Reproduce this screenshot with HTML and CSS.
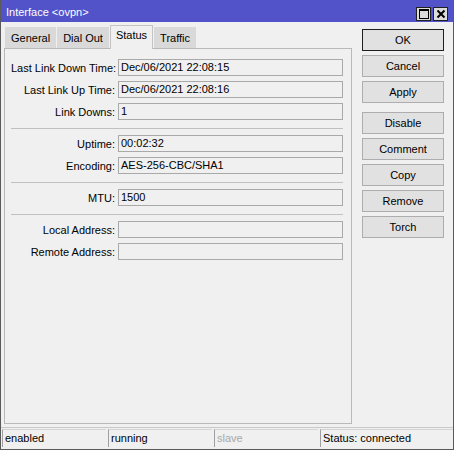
FILE: index.html
```html
<html>
	<head>
		<title>Interface &lt;ovpn&gt;</title>
		<link rel="stylesheet" href="styles.css">
	</head>
	<body>
		<div class="window">
			<div class="titlebar">
				<span class="title">Interface &lt;ovpn&gt;</span>
				<span class="tbtn">
					<svg width="10" height="10" viewBox="0 0 10 10"><rect x="0.5" y="0.5" width="9" height="9" fill="none" stroke="#000" stroke-width="1"/><rect x="0" y="0" width="10" height="2" fill="#000"/></svg>
				</span>
				<span class="tbtn">
					<svg width="10" height="10" viewBox="0 0 10 10"><path d="M1.5 1.5 L8.5 8.5 M8.5 1.5 L1.5 8.5" stroke="#000" stroke-width="2"/></svg>
				</span>
			</div>

			<div class="main">
				<div class="left">
					<div class="tabs">
						<div class="tab">General</div>
						<div class="tab">Dial Out</div>
						<div class="tab active">Status</div>
						<div class="tab">Traffic</div>
					</div>
					<div class="panel">
						<div class="section">
							<div class="row"><label>Last Link Down Time:</label><div class="field">Dec/06/2021 22:08:15</div></div>
							<div class="row"><label>Last Link Up Time:</label><div class="field">Dec/06/2021 22:08:16</div></div>
							<div class="row"><label>Link Downs:</label><div class="field">1</div></div>
						</div>
						<div class="sep"></div>
						<div class="section">
							<div class="row"><label>Uptime:</label><div class="field">00:02:32</div></div>
							<div class="row"><label>Encoding:</label><div class="field">AES-256-CBC/SHA1</div></div>
						</div>
						<div class="sep"></div>
						<div class="section">
							<div class="row"><label>MTU:</label><div class="field">1500</div></div>
						</div>
						<div class="sep"></div>
						<div class="section">
							<div class="row"><label>Local Address:</label><div class="field"></div></div>
							<div class="row"><label>Remote Address:</label><div class="field"></div></div>
						</div>
					</div>
				</div>

				<div class="buttons">
					<button class="btn default">OK</button>
					<button class="btn">Cancel</button>
					<button class="btn">Apply</button>
					<button class="btn group">Disable</button>
					<button class="btn">Comment</button>
					<button class="btn">Copy</button>
					<button class="btn">Remove</button>
					<button class="btn">Torch</button>
				</div>
			</div>

			<div class="statusbar">
				<div class="cell">enabled</div>
				<div class="cell">running</div>
				<div class="cell off">slave</div>
				<div class="cell">Status: connected</div>
			</div>
		</div>
	</body>
</html>
```

FILE: styles.css
```css
body {
	margin: 0;
	background: #ffffff;
	font-family: "Liberation Sans", Arial, sans-serif;
	font-size: 11px;
	color: #000;
}

.window {
	width: 454px;
	height: 450px;
	box-sizing: border-box;
	border: 1px solid #5a5a5a;
	border-top: 0;
	background: #f0f0f0;
	display: flex;
	flex-direction: column;
}

.titlebar {
	height: 22px;
	flex: none;
	background: #5252c9;
	color: #fff;
	display: flex;
	align-items: center;
	padding: 0 5px 0 5px;
	gap: 2px;
}

.titlebar .title {
	flex: 1;
	font-size: 11px;
	padding-top: 1px;
}

.tbtn {
	width: 13px;
	height: 12px;
	border: 1px solid #202020;
	background: #dcdcdc;
	display: flex;
	align-items: center;
	justify-content: center;
	margin-top: 5px;
}

.main {
	flex: 1;
	display: flex;
	padding: 3px 0 0 3px;
}

.left {
	width: 348px;
	display: flex;
	flex-direction: column;
}

.tabs {
	height: 23px;
	display: flex;
	align-items: flex-end;
	padding-left: 1px;
	position: relative;
	z-index: 1;
}

.tab {
	height: 21px;
	box-sizing: border-box;
	padding: 0 5px;
	margin-right: 1px;
	line-height: 21px;
	font-size: 11px;
	background: #d9d9d9;
	border: 1px solid #d9d9d9;
	border-bottom: 0;
}

.tab.active {
	height: 24px;
	line-height: 19px;
	margin-bottom: -1px;
	background: #f0f0f0;
	border-color: #c4c4c4;
}

.panel {
	height: 376px;
	box-sizing: border-box;
	border: 1px solid #b9b9b9;
	padding: 10px 8px 0 6px;
}

.section {
	display: flex;
	flex-direction: column;
	gap: 5px;
}

.row {
	display: flex;
	height: 17px;
	align-items: center;
}

.row label {
	width: 104px;
	margin-right: 3px;
	text-align: right;
	white-space: nowrap;
}

.field {
	flex: 1;
	height: 17px;
	box-sizing: border-box;
	border: 1px solid #a9a9a9;
	background: #f0f0f0;
	padding-left: 2px;
	line-height: 15px;
	font-size: 11px;
}

.sep {
	height: 1px;
	background: #c0c0c0;
	margin: 8px 0 6px 0;
}

.buttons {
	width: 82px;
	margin-left: 10px;
	padding-top: 4px;
	display: flex;
	flex-direction: column;
	gap: 4px;
}

.btn {
	height: 22px;
	box-sizing: border-box;
	background: #e1e1e1;
	border: 1px solid #adadad;
	font-family: "Liberation Sans", Arial, sans-serif;
	font-size: 11px;
	color: #000;
	padding: 0;
}

.btn.default {
	border-color: #1e1e1e;
}

.btn.group {
	margin-top: 5px;
}

.statusbar {
	height: 22px;
	flex: none;
	margin-top: 2px;
	border-top: 1px solid #c8c8c8;
	display: flex;
	padding: 1px 0 2px 1px;
	box-sizing: border-box;
}

.cell {
	box-sizing: border-box;
	width: 104px;
	margin-right: 2px;
	border-left: 1px solid #a0a0a0;
	border-top: 1px solid #d4d4d4;
	padding-left: 2px;
	line-height: 17px;
	font-size: 11px;
	white-space: nowrap;
}

.cell:last-child {
	flex: 1;
	margin-right: 0;
}

.cell.off {
	color: #a8a8a8;
}
```
